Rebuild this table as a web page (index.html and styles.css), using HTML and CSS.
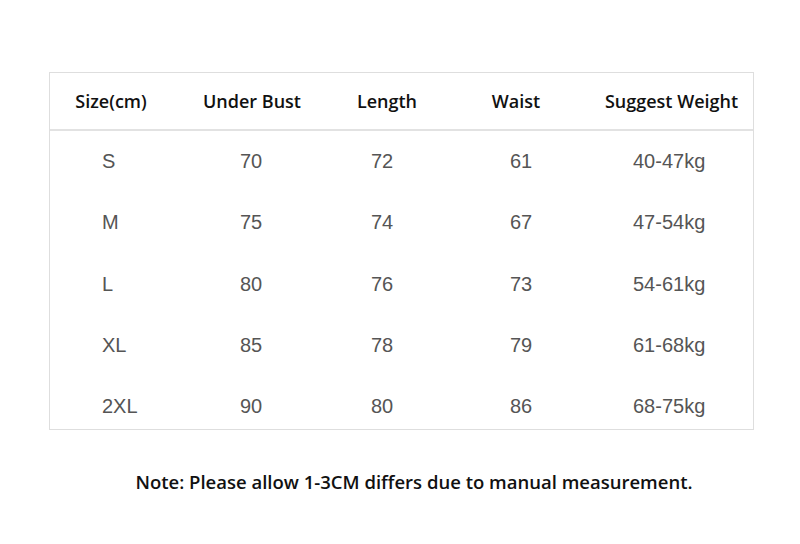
FILE: index.html
```html
<!DOCTYPE html>
<html>
<head>
<meta charset="utf-8">
<link rel="stylesheet" href="styles.css">
</head>
<body>
<div class="page">
  <div class="chart">
    <div class="row head">
      <div class="cell">Size(cm)</div>
      <div class="cell">Under Bust</div>
      <div class="cell">Length</div>
      <div class="cell">Waist</div>
      <div class="cell">Suggest Weight</div>
    </div>
    <div class="body">
      <div class="row item"><div class="cell">S</div><div class="cell">70</div><div class="cell">72</div><div class="cell">61</div><div class="cell">40-47kg</div></div>
      <div class="row item"><div class="cell">M</div><div class="cell">75</div><div class="cell">74</div><div class="cell">67</div><div class="cell">47-54kg</div></div>
      <div class="row item"><div class="cell">L</div><div class="cell">80</div><div class="cell">76</div><div class="cell">73</div><div class="cell">54-61kg</div></div>
      <div class="row item"><div class="cell">XL</div><div class="cell">85</div><div class="cell">78</div><div class="cell">79</div><div class="cell">61-68kg</div></div>
      <div class="row item"><div class="cell">2XL</div><div class="cell">90</div><div class="cell">80</div><div class="cell">86</div><div class="cell">68-75kg</div></div>
    </div>
  </div>
  <p class="note">Note: Please allow 1-3CM differs due to manual measurement.</p>
</div>
</body>
</html>
```
FILE: styles.css
```css
html, body {
  margin: 0;
  padding: 0;
  background: #ffffff;
}
.page {
  width: 800px;
  height: 544px;
  padding-top: 72px;
  box-sizing: border-box;
}
.chart {
  margin-left: 49px;
  width: 705px;
  border: 1px solid #dedede;
  box-sizing: border-box;
}
.row {
  display: grid;
}
.head {
  grid-template-columns: 122px 160px 110px 148px 1fr;
  height: 56px;
  align-items: center;
  border-bottom: 2px solid #e2e2e2;
  font-family: "Open Sans", "Noto Sans", sans-serif;
  font-size: 18px;
  font-weight: 600;
  color: #111;
  text-align: center;
}
.body {
  height: 298px;
  overflow: hidden;
}
.item {
  grid-template-columns: 138px 131px 139px 123px 1fr;
  padding-left: 52px;
  height: 61.3px;
  align-items: center;
  font-family: "Liberation Sans", Arial, sans-serif;
  font-size: 20px;
  color: #555;
}
.note {
  margin: 39px 0 0 0;
  padding-left: 28px;
  text-align: center;
  font-family: "Open Sans", "Noto Sans", sans-serif;
  font-size: 18.5px;
  font-weight: 600;
  color: #111;
}
```
